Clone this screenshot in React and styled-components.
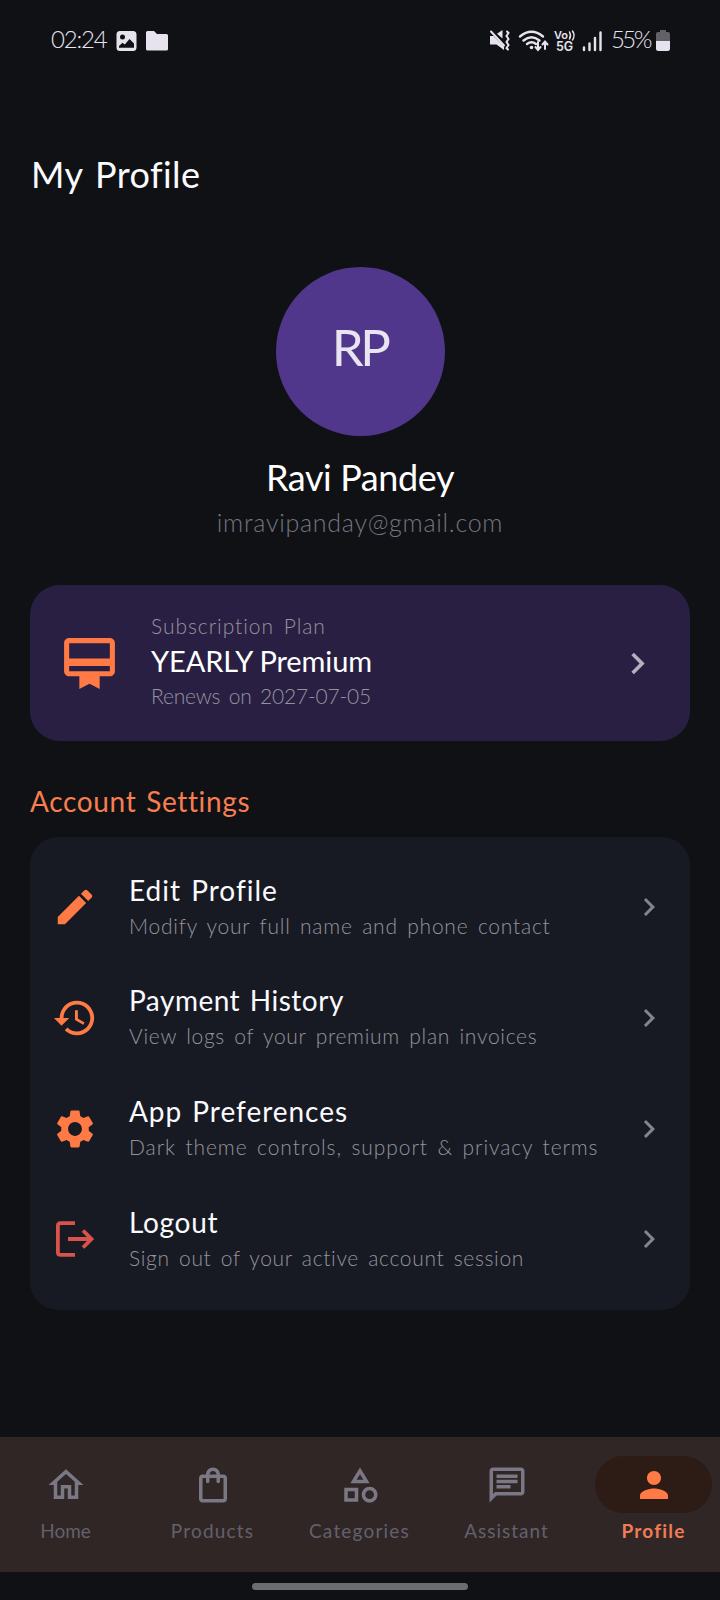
import styled, { createGlobalStyle } from 'styled-components';
import {
  MdCardMembership,
  MdChevronRight,
  MdEdit,
  MdHistory,
  MdOutlineCategory,
  MdOutlineChat,
  MdOutlineHome,
  MdOutlineShoppingBag,
  MdPerson,
  MdSettings,
} from 'react-icons/md';

const colors = {
  canvas: '#101115',
  card: '#181a23',
  plan: '#291f43',
  avatar: '#50378b',
  accent: '#ff7a45',
  danger: '#d9534a',
  text: '#fafaff',
  muted: '#95939d',
  dim: '#757480',
  nav: '#302626',
  navActive: '#2d1b16',
  navIcon: '#7a7884',
  status: '#e6e3ee',
};

const GlobalStyle = createGlobalStyle`
  body {
    margin: 0;
    background-color: ${colors.canvas};
    font-family: Lato, "Liberation Sans", sans-serif;
    font-variant-ligatures: none;
  }
  svg {
    display: block;
    flex-shrink: 0;
  }
`;

const Screen = styled.div`
    display: flex;
    flex-direction: column;
    box-sizing: border-box;
    width: 720px;
    height: 1600px;
    overflow: hidden;
    background-color: ${colors.canvas};
`;

const Text = styled.div`
    white-space: nowrap;
    letter-spacing: ${(p) => p.$spacing || 0}px;
`;

const StatusBar = styled.div`
    display: flex;
    justify-content: space-between;
    padding: 23px 50px 0 51px;
    height: 35px;
    color: ${colors.status};
`;

const StatusGroup = styled.div`
    display: flex;
    align-items: flex-start;
    height: 35px;
`;

const StatusText = styled(Text)`
    width: ${(p) => p.$width}px;
    font-size: 24px;
    font-weight: 300;
    line-height: 31px;
`;

const Content = styled.div`
    display: flex;
    flex-direction: column;
    flex: 1;
    padding: 94px 30px 0 30px;
`;

const Title = styled(Text)`
    padding-left: 1px;
    font-size: 36px;
    line-height: 44px;
    word-spacing: 3px;
    color: ${colors.text};
`;

const Identity = styled.div`
    display: flex;
    flex-direction: column;
    align-items: center;
    margin-top: 71px;
`;

const Avatar = styled.div`
    display: flex;
    align-items: center;
    justify-content: center;
    box-sizing: border-box;
    width: 169px;
    height: 169px;
    padding: 0 3px 10px 2px;
    border-radius: 50%;
    background-color: ${colors.avatar};
    color: #e9e4f1;
    font-size: 51px;
    letter-spacing: -3.5px;
`;

const Name = styled(Text)`
    margin-top: 19px;
    font-size: 36px;
    line-height: 44px;
    color: #ffffff;
`;

const Email = styled(Text)`
    margin-top: 7px;
    font-size: 25px;
    font-weight: 300;
    line-height: 32px;
    color: ${colors.dim};
`;

const PlanCard = styled.div`
    display: flex;
    align-items: center;
    box-sizing: border-box;
    height: 156px;
    margin-top: 47px;
    padding: 0 31px 0 29px;
    border-radius: 30px;
    background-color: ${colors.plan};
    color: ${colors.accent};
`;

const PlanBody = styled.div`
    display: flex;
    flex-direction: column;
    flex: 1;
    gap: 3px;
    padding: 0 0 4px 31px;
`;

const Small = styled(Text)`
    font-size: 21px;
    font-weight: 300;
    line-height: 28px;
    word-spacing: 3px;
    color: ${(p) => p.$color || colors.muted};
`;

const PlanName = styled(Text)`
    margin-bottom: 1px;
    font-size: 29px;
    line-height: 35px;
    color: #ffffff;
`;

const SectionTitle = styled(Text)`
    margin-top: 42px;
    font-size: 28px;
    line-height: 36px;
    word-spacing: 2px;
    color: #f77e50;
`;

const SettingsCard = styled.div`
    display: flex;
    flex-direction: column;
    margin-top: 18px;
    padding: 15px 0;
    border-radius: 28px;
    background-color: ${colors.card};
`;

const Row = styled.div`
    display: flex;
    align-items: center;
    box-sizing: border-box;
    height: 110.67px;
    padding: 0 23px 0 22px;
    color: ${(p) => p.$color || colors.accent};
`;

const RowBody = styled.div`
    display: flex;
    flex-direction: column;
    flex: 1;
    gap: 4px;
    padding: 0 0 3px 31px;
`;

const RowTitle = styled(Text)`
    font-size: 28px;
    line-height: 36px;
    word-spacing: 2px;
    color: ${colors.text};
`;

const Chevron = styled(MdChevronRight)`
    color: ${(p) => p.$color};
`;

const NavBar = styled.div`
    display: flex;
    gap: 16px;
    box-sizing: border-box;
    height: 135px;
    padding: 19px 1px 0 0;
    background-color: ${colors.nav};
`;

const NavItem = styled.div`
    display: flex;
    flex-direction: column;
    align-items: center;
    flex: 1;
    min-width: 0;
    gap: 6px;
    color: ${(p) => (p.$active ? colors.accent : colors.navIcon)};
`;

const Pill = styled.div`
    display: flex;
    align-items: center;
    justify-content: center;
    width: 117px;
    height: 57px;
    border-radius: 29px;
    background-color: ${(p) => (p.$active ? colors.navActive : 'transparent')};
`;

const NavLabel = styled(Text)`
    font-size: 19px;
    font-weight: ${(p) => (p.$active ? 700 : 400)};
    line-height: 24px;
    color: ${(p) => (p.$active ? '#f07c55' : '#62616c')};
`;

const GestureArea = styled.div`
    display: flex;
    justify-content: center;
    box-sizing: border-box;
    height: 28px;
    padding-top: 11px;
`;

const GestureBar = styled.div`
    width: 216px;
    height: 7px;
    border-radius: 4px;
    background-color: #6d6c73;
`;

function LogoutIcon() {
  return (
    <svg width="46" height="46" viewBox="0 0 46 46" fill="none" stroke="currentColor" strokeWidth="3.8" strokeLinejoin="round">
      <path d="M23 7.2H8.5Q5.900 7.200 5.900 9.800v26.400q0 2.600 2.600 2.600H23" />
      <path d="M16 23H39M31 14.500l8.500 8.500-8.500 8.500" strokeLinejoin="miter" />
    </svg>
  );
}

function NoticeIcons() {
  return (
    <svg width="53" height="35" viewBox="0 0 53 35" fill="currentColor">
      <path fillRule="evenodd" d="M4 8h13q3.500 0 3.500 3.500v13q0 3.500-3.500 3.500H4Q.5 28 .5 24.500v-13Q.5 8 4 8zM6.500 11.500a2.500 2.500 0 1 0 0 5 2.500 2.500 0 1 0 0-5zM3 24.800h15v-4.300l-4.500-4.500-4.700 5.500-2.300-1.800L3 23z" />
      <path d="M31.500 8H38l3 3h9.500q1.500 0 1.500 1.500V26q0 1.500-1.500 1.500h-19Q30 27.500 30 26V9.500Q30 8 31.500 8z" />
    </svg>
  );
}

function SignalIcons() {
  return (
    <svg width="122" height="35" viewBox="0 0 122 35" fill="none" stroke="currentColor" strokeLinecap="round">
      {/* muted speaker with vibration waves */}
      <path d="M1 13h3.500l10.500 10.500V27l-7.500-5.500H1zM8 10.800l5.500-3.800v8.500z" fill="currentColor" stroke="none" />
      <path d="M2 8.500l13 14" strokeWidth="2" />
      <path d="M18 8.500l1.500 1.500-2 3 2 3-2 3 2 3-2 3 1.500 1.500" strokeWidth="2" />
      {/* wifi */}
      <path d="M31 13.500q11.500-9.500 23 0M34.500 17.500q8-6.500 16 0M38 21q4.500-3.500 9 0" strokeWidth="2.400" />
      <circle cx="42.500" cy="24.500" r="1.800" fill="currentColor" stroke="none" />
      <path d="M49 19v7.500M46.500 24l2.500 3 2.500-3M56 26v-7M53.500 21.500l2.500-3 2.500 3" strokeWidth="2" />
      <text x="65" y="16" fontFamily="Inter" fontSize="11" fontWeight="600" fill="currentColor" stroke="none">Vo</text>
      <path d="M80.500 9q2 3.500 0 7M83.500 8q3 4.500 0 9" strokeWidth="1.500" />
      <text x="67" y="28" fontFamily="Inter" fontSize="12.500" fontWeight="600" fill="currentColor" stroke="none">5G</text>
      {/* signal strength */}
      <path d="M95 24.500v2.500M100.500 20.500v6.500M106 15v12M111.500 9.500v17.500" strokeWidth="2.400" />
    </svg>
  );
}

function BatteryIcon() {
  return (
    <svg width="14" height="35" viewBox="0 0 14 35">
      <path d="M4 9V7h6v2h2q2 0 2 2v7H0v-7q0-2 2-2z" fill="#626168" />
      <path d="M0 18h14v7.500q0 2.500-2.500 2.500h-9Q0 28 0 25.500z" fill="currentColor" />
    </svg>
  );
}

const settings = [
  { title: 'Edit Profile', spacing: 1.0, note: 'Modify your full name and phone contact', noteSpacing: 0.77, Icon: MdEdit },
  { title: 'Payment History', spacing: 0.5, note: 'View logs of your premium plan invoices', noteSpacing: 0.7, Icon: MdHistory },
  { title: 'App Preferences', spacing: 0.97, note: 'Dark theme controls, support & privacy terms', noteSpacing: 0.9, Icon: MdSettings },
  { title: 'Logout', spacing: 0.7, note: 'Sign out of your active account session', noteSpacing: 0.66, Icon: LogoutIcon, color: colors.danger },
];

const tabs = [
  { label: 'Home', spacing: 0, Icon: MdOutlineHome },
  { label: 'Products', spacing: 1.2, Icon: MdOutlineShoppingBag },
  { label: 'Categories', spacing: 1.2, Icon: MdOutlineCategory },
  { label: 'Assistant', spacing: 1.0, Icon: MdOutlineChat },
  { label: 'Profile', spacing: 1.2, Icon: MdPerson, active: true },
];

export default function App() {
  return (
    <Screen>
      <GlobalStyle />
      <StatusBar>
        <StatusGroup>
          <StatusText $width={65} $spacing={-1.2}>02:24</StatusText>
          <NoticeIcons />
        </StatusGroup>
        <StatusGroup>
          <SignalIcons />
          <StatusText $width={45} $spacing={-2.6}>55%</StatusText>
          <BatteryIcon />
        </StatusGroup>
      </StatusBar>
      <Content>
        <Title $spacing={0.4}>My Profile</Title>
        <Identity>
          <Avatar>RP</Avatar>
          <Name $spacing={-0.4}>Ravi Pandey</Name>
          <Email $spacing={0.73}>imravipanday@gmail.com</Email>
        </Identity>
        <PlanCard>
          <MdCardMembership size={61} />
          <PlanBody>
            <Small $spacing={0.95}>Subscription Plan</Small>
            <PlanName $spacing={-0.1}>YEARLY Premium</PlanName>
            <Small $spacing={-0.2}>Renews on 2027-07-05</Small>
          </PlanBody>
          <Chevron size={43} $color="#b3afbd" />
        </PlanCard>
        <SectionTitle $spacing={0.65}>Account Settings</SectionTitle>
        <SettingsCard>
          {settings.map(({ title, spacing, note, noteSpacing, Icon, color }) => (
            <Row key={title} $color={color}>
              <Icon size={46} />
              <RowBody>
                <RowTitle $spacing={spacing}>{title}</RowTitle>
                <Small $spacing={noteSpacing}>{note}</Small>
              </RowBody>
              <Chevron size={36} $color="#85838d" />
            </Row>
          ))}
        </SettingsCard>
      </Content>
      <NavBar>
        {tabs.map(({ label, spacing, Icon, active }) => (
          <NavItem key={label} $active={active}>
            <Pill $active={active}>
              <Icon size={42} />
            </Pill>
            <NavLabel $active={active} $spacing={spacing}>{label}</NavLabel>
          </NavItem>
        ))}
      </NavBar>
      <GestureArea>
        <GestureBar />
      </GestureArea>
    </Screen>
  );
}
